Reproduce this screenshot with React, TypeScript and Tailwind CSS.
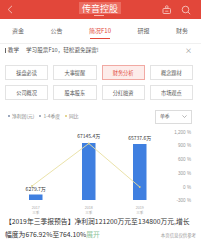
import React from "react";

const buttons = [
  "操盘必读",
  "大事提醒",
  "财务分析",
  "概念题材",
  "公司概况",
  "股本股东",
  "分红融资",
  "市场观点",
];

function Chart() {
  const axis = [
    { t: "1,200 %", y: 6 },
    { t: "900 %", y: 19.5 },
    { t: "600 %", y: 33 },
    { t: "300 %", y: 47 },
    { t: "0 %", y: 61 },
    { t: "-300 %", y: 74 },
  ];
  const bars = [
    { x: 29, top: 68.5, label: "6279.7万", ly: 64.5, yr: "2017" },
    { x: 82, top: 17, label: "67145.4万", ly: 11.5, yr: "2018" },
    { x: 133, top: 18, label: "65737.6万", ly: 13.5, yr: "2019" },
  ];
  return (
    <svg width="201" height="90" viewBox="0 0 201 90" className="block">
      {axis.map((a) => (
        <text
          key={a.t}
          x="191"
          y={a.y + 1.6}
          textAnchor="end"
          fontSize="4.6"
          fill="#9a9a9a"
          fontFamily="Liberation Sans, sans-serif"
        >
          {a.t}
        </text>
      ))}
      {bars.map((b) => (
        <g key={b.label}>
          <rect x={b.x} y={b.top} width="13.5" height={74 - b.top} fill="#3f7fe0" />
          <text
            x={b.x + 6.75}
            y={b.ly}
            textAnchor="middle"
            fontSize="5"
            fill="#333"
            fontFamily="Noto Sans CJK SC, sans-serif"
          >
            {b.label}
          </text>
          <text
            x={b.x + 6.75}
            y="82.5"
            textAnchor="middle"
            fontSize="3.6"
            fill="#a8a8a8"
            fontFamily="Liberation Sans, sans-serif"
          >
            {b.yr}
          </text>
          <text
            x={b.x + 6.75}
            y="87.5"
            textAnchor="middle"
            fontSize="3.6"
            fill="#a8a8a8"
            fontFamily="Noto Sans CJK SC, sans-serif"
          >
            三季
          </text>
        </g>
      ))}
      <polyline
        points="32,60 88.75,17.5 139.75,61"
        fill="none"
        stroke="#e8df9f"
        strokeWidth="0.9"
      />
      <circle cx="32" cy="60" r="0.9" fill="#d9cf88" />
      <circle cx="88.75" cy="17.5" r="0.9" fill="#d9cf88" />
      <circle cx="139.75" cy="61" r="0.9" fill="#d9cf88" />
    </svg>
  );
}

export default function App() {
  return (
    <div className="w-[201px] h-[245px] overflow-hidden bg-white font-['Noto_Sans_CJK_SC',sans-serif] text-[#333]">
      {/* header */}
      <div className="relative h-[19px] bg-[#e2473a] flex items-center justify-between px-[7px]">
        <svg width="6" height="9" viewBox="0 0 6 9">
          <path d="M5 0.8 L1.2 4.5 L5 8.2" fill="none" stroke="#f6c6c0" strokeWidth="0.9" />
        </svg>
        <div className="absolute left-[79px] top-[2px] h-[12px] w-[42px] bg-[#ec6c60] flex items-center justify-center text-[9px] leading-none text-white">
          传音控股
        </div>
        <div className="absolute left-[94px] top-[15px] h-[1px] w-[10px] bg-[#f7b8b0]" />
        <div className="flex items-center gap-[9px] pr-[3px]">
          <svg width="10" height="9" viewBox="0 0 10 9">
            <rect x="1" y="3.5" width="7.5" height="5" rx="0.8" fill="none" stroke="#f6c6c0" strokeWidth="0.9" />
            <circle cx="4.8" cy="2" r="1.3" fill="none" stroke="#f6c6c0" strokeWidth="0.8" />
            <path d="M3.2 6.2 H6.4" stroke="#f6c6c0" strokeWidth="0.8" />
          </svg>
          <svg width="10" height="10" viewBox="0 0 10 10">
            <circle cx="4.5" cy="4.5" r="3.3" fill="none" stroke="#f6c6c0" strokeWidth="0.9" />
            <path d="M7 7 L9.2 9.2" stroke="#f6c6c0" strokeWidth="0.9" />
          </svg>
        </div>
      </div>

      {/* tabs */}
      <div className="h-[25px] flex items-center justify-between pl-[12px] pr-[13px] text-[6px] leading-none text-[#666] border-b border-[#f0f0f0]">
        <span>资金</span>
        <span>公告</span>
        <span className="relative text-[#e2473a]">
          简况F10
          <span className="absolute left-[1px] right-[1px] top-[10px] h-[1px] bg-[#e2473a]" />
        </span>
        <span>研报</span>
        <span>财务</span>
      </div>

      {/* teaching row */}
      <div className="h-[13px] flex items-center justify-between pl-[5px] pr-[9px] text-[5.6px] leading-none text-[#555]">
        <div className="flex items-center">
          <span className="w-[0.8px] h-[5px] bg-[#666] mr-[2px]" />
          <span>教学</span>
          <span className="ml-[7px]">学习股票F10，轻松避免踩雷!</span>
        </div>
        <span className="text-[#888] text-[7px]">×</span>
      </div>

      {/* buttons */}
      <div className="grid grid-cols-4 gap-x-[5px] gap-y-[5px] pl-[5px] pr-[8px] pt-[8px]">
        {buttons.map((b) => (
          <div
            key={b}
            className={
              b === "财务分析"
                ? "h-[15px] flex items-center justify-center border border-[#f1a9a3] bg-[#fdecea] text-[#e2473a] text-[5.2px] leading-none"
                : "h-[15px] flex items-center justify-center border border-[#e3e3e3] text-[#555] text-[5.2px] leading-none"
            }
          >
            {b}
          </div>
        ))}
      </div>

      {/* legend */}
      <div className="h-[15px] mt-[9px] flex items-center justify-between pl-[8px] pr-[9px] text-[4.8px] leading-none text-[#888]">
        <div className="flex items-center">
          <span className="w-[2px] h-[2px] rounded-full bg-[#7d8da8] mr-[2px]" />
          <span>净利润(元)</span>
          <span className="w-[2px] h-[2px] rounded-full bg-[#8a97ad] ml-[5px] mr-[2px]" />
          <span>1-4季度</span>
          <span className="w-[2px] h-[2px] rounded-full bg-[#dcc96f] ml-[5px] mr-[2px]" />
          <span>同比</span>
        </div>
        <div className="w-[37px] h-[14px] border border-[#dcdcdc] flex items-center justify-between px-[4px] text-[#666]">
          <span>单季</span>
          <svg width="5" height="3" viewBox="0 0 5 3">
            <path d="M0.4 0.4 L2.5 2.5 L4.6 0.4" fill="none" stroke="#888" strokeWidth="0.6" />
          </svg>
        </div>
      </div>

      {/* chart */}
      <div className="mt-[2px]">
        <Chart />
      </div>

      {/* bottom text */}
      <div className="px-[5px] text-[6.8px] leading-[11px] text-[#333]">
        <div className="whitespace-nowrap">【2019年三季报预告】净利润121200万元至134800万元,增长</div>
        <div className="flex items-center justify-between">
          <span className="whitespace-nowrap">
            幅度为676.92%至764.10%<span className="text-[#8fc49a]">展开</span>
          </span>
          <span className="text-[4.4px] text-[#999] mt-[3px]">本页信息仅供参考</span>
        </div>
      </div>
    </div>
  );
}
